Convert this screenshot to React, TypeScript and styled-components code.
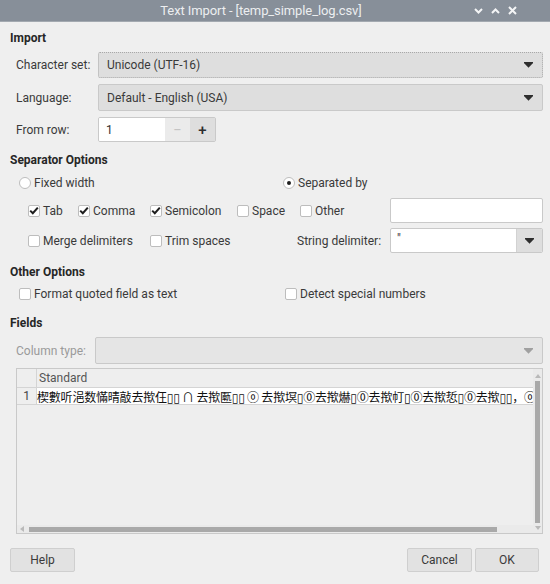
import React from 'react';
import styled, { createGlobalStyle } from 'styled-components';

const Global = createGlobalStyle`
  html, body { margin: 0; padding: 0; background: #efefef; }
  body { font-family: Roboto, "Noto Sans", "Liberation Sans", sans-serif; font-size: 12px; color: #3a3a3a; }
  * { box-sizing: border-box; }
`;

const Window = styled.div`
  width: 550px;
  height: 584px;
  display: flex;
  flex-direction: column;
  background: #efefef;
  overflow: hidden;
`;

const TitleBar = styled.div`
  height: 22px;
  flex-shrink: 0;
  background: #878f99;
  border-bottom: 1px solid #a3a9b0;
  display: grid;
  grid-template-columns: 1fr;
  align-items: center;
`;

const Title = styled.div`
  grid-area: 1 / 1;
  justify-self: stretch;
  text-align: center;
  padding-right: 28px;
  color: #eceef0;
  font-size: 13px;
  letter-spacing: -0.1px;
`;

const Controls = styled.div`
  grid-area: 1 / 1;
  justify-self: end;
  margin-right: 33px;
  display: flex;
  align-items: center;
  gap: 8px;
  color: #f4f5f6;
`;

const Body = styled.div`
  flex: 1;
  display: flex;
  flex-direction: column;
  padding: 8px 7px 12px 10px;
`;

const SectionTitle = styled.div<{ $mt?: number }>`
  font-weight: 700;
  line-height: 16px;
  color: #262626;
  margin-top: ${p => p.$mt ?? 0}px;
`;

const Row = styled.div<{ $mt: number; $h: number; $pl?: number }>`
  display: flex;
  align-items: center;
  margin-top: ${p => p.$mt}px;
  height: ${p => p.$h}px;
  padding-left: ${p => p.$pl ?? 0}px;
`;

const Label = styled.div<{ $w: number; $muted?: boolean }>`
  width: ${p => p.$w}px;
  margin-left: 6px;
  flex-shrink: 0;
  color: ${p => (p.$muted ? '#9a9a9a' : '#3a3a3a')};
`;

const Combo = styled.div<{ $focus?: boolean; $disabled?: boolean }>`
  flex: 1;
  height: 100%;
  display: flex;
  align-items: center;
  padding: 0 9px 0 8px;
  background: ${p => (p.$disabled ? '#e5e5e5' : '#dedede')};
  border: 1px ${p => (p.$focus ? 'dotted #a8a8a8' : 'solid #c9c9c9')};
  border-radius: 2px;
  color: #3a3a3a;
`;

const ComboText = styled.div`
  flex: 1;
`;

const Arrow = ({ color = '#2e2e2e' }: { color?: string }) => (
  <svg width="9" height="6" viewBox="0 0 9 6">
    <rect x="0" y="0" width="9" height="1.2" fill={color} />
    <polygon points="0,1 9,1 4.5,5.8" fill={color} />
  </svg>
);

const SpinBox = styled.div`
  width: 118px;
  height: 100%;
  display: flex;
  border: 1px solid #c9c9c9;
  border-radius: 2px;
  overflow: hidden;
`;

const SpinInput = styled.div`
  flex: 1;
  background: #fff;
  display: flex;
  align-items: center;
  padding-left: 7px;
  color: #333;
`;

const SpinBtn = styled.div<{ $disabled?: boolean }>`
  width: 25px;
  display: flex;
  align-items: center;
  justify-content: center;
  background: ${p => (p.$disabled ? '#ebebeb' : '#dedede')};
  color: ${p => (p.$disabled ? '#c4c4c4' : '#2e2e2e')};
  font-size: 15px;
  font-weight: ${p => (p.$disabled ? 400 : 500)};
`;

const Item = styled.div<{ $w?: number }>`
  display: flex;
  align-items: center;
  gap: 3px;
  width: ${p => (p.$w ? `${p.$w}px` : 'auto')};
  flex-shrink: 0;
  color: #3a3a3a;
`;

const Box = styled.div`
  width: 12px;
  height: 12px;
  background: #fff;
  border: 1px solid #bdbdbd;
  border-radius: 2px;
  display: flex;
  align-items: center;
  justify-content: center;
`;

const Radio = styled.div<{ $on?: boolean }>`
  width: 12px;
  height: 12px;
  border-radius: 50%;
  background: #fff;
  border: 1px solid #bdbdbd;
  display: flex;
  align-items: center;
  justify-content: center;
  &::after {
    content: '';
    width: 4px;
    height: 4px;
    border-radius: 50%;
    background: ${p => (p.$on ? '#1f1f1f' : 'transparent')};
  }
`;

const Check = () => (
  <svg width="10" height="9" viewBox="0 0 10 9">
    <path d="M1.2 4.6 L3.8 7.2 L8.8 1.6" stroke="#1f1f1f" strokeWidth="2" fill="none" />
  </svg>
);

const CheckItem = ({ label, checked, w }: { label: string; checked?: boolean; w?: number }) => (
  <Item $w={w}>
    <Box>{checked && <Check />}</Box>
    <span>{label}</span>
  </Item>
);

const TextField = styled.div`
  flex: 1;
  height: 100%;
  background: #fff;
  border: 1px solid #c9c9c9;
  border-radius: 2px;
`;

const EditCombo = styled.div`
  flex: 1;
  height: 100%;
  display: flex;
  background: #fff;
  border: 1px solid #c9c9c9;
  border-radius: 2px;
  overflow: hidden;
`;

const EditText = styled.div`
  flex: 1;
  padding: 3px 0 0 6px;
  color: #333;
`;

const DropBtn = styled.div`
  width: 26px;
  display: flex;
  align-items: center;
  justify-content: center;
  background: #dedede;
  border-left: 1px solid #d2d2d2;
`;

const Grid = styled.div`
  margin-top: 4px;
  margin-left: 6px;
  height: 166px;
  border: 1px solid #c9c9c9;
  background: #eeeeee;
  display: grid;
  grid-template-columns: 1fr 9px;
  grid-template-rows: 1fr 8px;
  overflow: hidden;
`;

const TableArea = styled.div`
  grid-row: 1;
  grid-column: 1;
  overflow: hidden;
  display: flex;
  flex-direction: column;
`;

const TRow = styled.div<{ $h: number }>`
  display: flex;
  height: ${p => p.$h}px;
  border-bottom: 1px solid #d4d4d4;
`;

const NumCell = styled.div`
  width: 20px;
  flex-shrink: 0;
  border-right: 1px solid #d4d4d4;
  display: flex;
  align-items: center;
  justify-content: center;
  color: #444;
  background: #eeeeee;
`;

const HeadCell = styled.div`
  flex: 1;
  padding-left: 2px;
  display: flex;
  align-items: center;
  color: #555;
`;

const DataCell = styled.div`
  flex: 1;
  min-width: 0;
  background: #fff;
  overflow: hidden;
  display: flex;
  align-items: center;
`;

const DataText = styled.span`
  white-space: nowrap;
  font-family: "Noto Sans CJK SC", "Noto Sans CJK JP", "DejaVu Sans", sans-serif;
  font-size: 12px;
  color: #111;
  letter-spacing: -0.2px;
`;

const VScroll = styled.div`
  grid-row: 1 / 3;
  grid-column: 2;
  background: #eaeaea;
  display: flex;
  flex-direction: column;
  align-items: center;
  padding: 5px 0 2px;
`;

const VThumb = styled.div`
  width: 5px;
  height: 142px;
  margin: 3px 0 3px;
  background: #a9a9a9;
`;

const HScroll = styled.div`
  grid-row: 2;
  grid-column: 1;
  background: #eaeaea;
  display: flex;
  align-items: center;
  padding-left: 3px;
`;

const HThumb = styled.div`
  width: 468px;
  height: 5px;
  margin-left: 5px;
  background: #a9a9a9;
`;

const SmallArrow = ({ dir }: { dir: 'up' | 'down' | 'left' }) => {
  const pts =
    dir === 'up' ? '0,4 6,4 3,0' : dir === 'down' ? '0,0 6,0 3,4' : '4,0 4,6 0,3';
  const w = dir === 'left' ? 4 : 6;
  const h = dir === 'left' ? 6 : 4;
  return (
    <svg width={w} height={h} viewBox={`0 0 ${w} ${h}`}>
      <polygon points={pts} fill="#b9b9b9" />
    </svg>
  );
};

const Buttons = styled.div`
  margin-top: 14px;
  margin-right: 4px;
  height: 24px;
  display: flex;
  align-items: stretch;
  gap: 3px;
`;

const Spacer = styled.div`
  flex: 1;
`;

const Button = styled.div<{ $w: number }>`
  width: ${p => p.$w}px;
  display: flex;
  align-items: center;
  justify-content: center;
  background: #e2e2e2;
  border: 1px solid #cfcfcf;
  border-radius: 2px;
  color: #3a3a3a;
`;

const ChevDown = () => (
  <svg width="9" height="6" viewBox="0 0 9 6">
    <path d="M1 1 L4.5 4.5 L8 1" stroke="currentColor" strokeWidth="2" fill="none" />
  </svg>
);
const ChevUp = () => (
  <svg width="9" height="6" viewBox="0 0 9 6">
    <path d="M1 5 L4.5 1.5 L8 5" stroke="currentColor" strokeWidth="2" fill="none" />
  </svg>
);
const Close = () => (
  <svg width="9" height="9" viewBox="0 0 9 9">
    <path d="M1 1 L8 8 M8 1 L1 8" stroke="currentColor" strokeWidth="2" fill="none" />
  </svg>
);

const DATA =
  '楔數听浥数慲晴敲去揿仼▯▯ ∩ 去揿匭▯▯ ⓞ 去揿塓▯⓪去揿爀▯⓪去揿帄▯⓪去揿悊▯⓪去揿▯▯，ⓞ去揿';

export default function App() {
  return (
    <Window>
      <Global />
      <TitleBar>
        <Title>Text Import - [temp_simple_log.csv]</Title>
        <Controls>
          <ChevDown />
          <ChevUp />
          <Close />
        </Controls>
      </TitleBar>
      <Body>
        <SectionTitle>Import</SectionTitle>
        <Row $mt={6} $h={26}>
          <Label $w={82}>Character set:</Label>
          <Combo $focus>
            <ComboText>Unicode (UTF-16)</ComboText>
            <Arrow />
          </Combo>
        </Row>
        <Row $mt={6} $h={27}>
          <Label $w={82}>Language:</Label>
          <Combo>
            <ComboText>Default - English (USA)</ComboText>
            <Arrow />
          </Combo>
        </Row>
        <Row $mt={6} $h={25}>
          <Label $w={82}>From row:</Label>
          <SpinBox>
            <SpinInput>1</SpinInput>
            <SpinBtn $disabled>−</SpinBtn>
            <SpinBtn>+</SpinBtn>
          </SpinBox>
        </Row>

        <SectionTitle $mt={10}>Separator Options</SectionTitle>
        <Row $mt={7} $h={16} $pl={9}>
          <Item $w={264}>
            <Radio />
            <span>Fixed width</span>
          </Item>
          <Item>
            <Radio $on />
            <span>Separated by</span>
          </Item>
        </Row>
        <Row $mt={7} $h={25} $pl={18}>
          <CheckItem label="Tab" checked w={50} />
          <CheckItem label="Comma" checked w={72} />
          <CheckItem label="Semicolon" checked w={87} />
          <CheckItem label="Space" w={63} />
          <CheckItem label="Other" w={90} />
          <TextField />
        </Row>
        <Row $mt={5} $h={25} $pl={18}>
          <CheckItem label="Merge delimiters" w={122} />
          <CheckItem label="Trim spaces" w={147} />
          <Item $w={93}>String delimiter:</Item>
          <EditCombo>
            <EditText>"</EditText>
            <DropBtn>
              <Arrow />
            </DropBtn>
          </EditCombo>
        </Row>

        <SectionTitle $mt={11}>Other Options</SectionTitle>
        <Row $mt={6} $h={16} $pl={9}>
          <CheckItem label="Format quoted field as text" w={266} />
          <CheckItem label="Detect special numbers" />
        </Row>

        <SectionTitle $mt={13}>Fields</SectionTitle>
        <Row $mt={6} $h={27}>
          <Label $w={79} $muted>
            Column type:
          </Label>
          <Combo $disabled>
            <ComboText />
            <Arrow color="#a0a0a0" />
          </Combo>
        </Row>

        <Grid>
          <TableArea>
            <TRow $h={19}>
              <NumCell />
              <HeadCell>Standard</HeadCell>
            </TRow>
            <TRow $h={17}>
              <NumCell>1</NumCell>
              <DataCell>
                <DataText>{DATA}</DataText>
              </DataCell>
            </TRow>
          </TableArea>
          <VScroll>
            <SmallArrow dir="up" />
            <VThumb />
            <SmallArrow dir="down" />
          </VScroll>
          <HScroll>
            <SmallArrow dir="left" />
            <HThumb />
          </HScroll>
        </Grid>

        <Buttons>
          <Button $w={65}>Help</Button>
          <Spacer />
          <Button $w={65}>Cancel</Button>
          <Button $w={64}>OK</Button>
        </Buttons>
      </Body>
    </Window>
  );
}
